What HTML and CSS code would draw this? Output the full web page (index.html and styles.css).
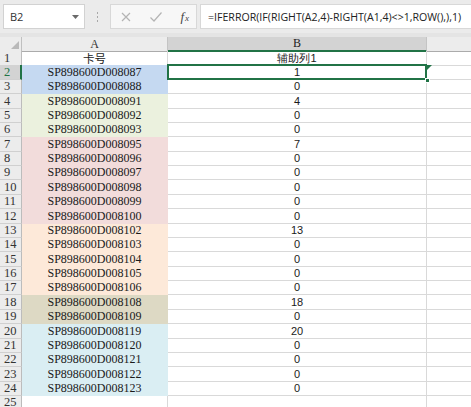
FILE: index.html
```html
<!DOCTYPE html>
<html>
<head>
<meta charset="utf-8">
<link rel="stylesheet" href="styles.css">
</head>
<body>
<div class="topbar">
  <div class="namebox">
    <span class="namebox-text">B2</span>
    <svg class="nb-arrow" width="7" height="4" viewBox="0 0 7 4"><path d="M0 0H7L3.5 4Z" fill="#6a6a6a"/></svg>
  </div>
  <div class="dots"><i></i><i></i><i></i></div>
  <div class="fxbox">
    <svg class="ic" width="12" height="12" viewBox="0 0 12 12"><path d="M2 2L10 10M10 2L2 10" stroke="#b4b4b4" stroke-width="1.2" fill="none"/></svg>
    <svg class="ic" width="14" height="12" viewBox="0 0 14 12"><path d="M1.5 6.5L5 10L12.5 1.5" stroke="#b4b4b4" stroke-width="1.2" fill="none"/></svg>
    <span class="fx"><i>f</i><span class="fx-x">x</span></span>
  </div>
  <div class="formula">=IFERROR(IF(RIGHT(A2,4)-RIGHT(A1,4)&lt;&gt;1,ROW(),),1)</div>
</div>
<div class="gap"></div>
<div class="sheet">
  <div class="row hdr">
    <div class="corner"><svg width="8" height="8" viewBox="0 0 8 8"><path d="M8 0V8H0Z" fill="#b9b9b9"/></svg></div>
    <div class="ch">A</div>
    <div class="ch ch-sel">B</div>
    <div class="ch ch-last"></div>
  </div>
  <div class="row"><div class="rh">1</div><div class="ca cjk">卡号</div><div class="cb cjk">辅助列1</div><div class="cc"></div></div>
  <div class="row"><div class="rh rh-sel">2</div><div class="ca c-blue">SP898600D008087</div><div class="cb cb-sel">1<span class="handle"></span><span class="tri"></span></div><div class="cc"></div></div>
  <div class="row"><div class="rh">3</div><div class="ca c-blue">SP898600D008088</div><div class="cb">0</div><div class="cc"></div></div>
  <div class="row"><div class="rh">4</div><div class="ca c-green">SP898600D008091</div><div class="cb">4</div><div class="cc"></div></div>
  <div class="row"><div class="rh">5</div><div class="ca c-green">SP898600D008092</div><div class="cb">0</div><div class="cc"></div></div>
  <div class="row"><div class="rh">6</div><div class="ca c-green">SP898600D008093</div><div class="cb">0</div><div class="cc"></div></div>
  <div class="row"><div class="rh">7</div><div class="ca c-pink">SP898600D008095</div><div class="cb">7</div><div class="cc"></div></div>
  <div class="row"><div class="rh">8</div><div class="ca c-pink">SP898600D008096</div><div class="cb">0</div><div class="cc"></div></div>
  <div class="row"><div class="rh">9</div><div class="ca c-pink">SP898600D008097</div><div class="cb">0</div><div class="cc"></div></div>
  <div class="row"><div class="rh">10</div><div class="ca c-pink">SP898600D008098</div><div class="cb">0</div><div class="cc"></div></div>
  <div class="row"><div class="rh">11</div><div class="ca c-pink">SP898600D008099</div><div class="cb">0</div><div class="cc"></div></div>
  <div class="row"><div class="rh">12</div><div class="ca c-pink">SP898600D008100</div><div class="cb">0</div><div class="cc"></div></div>
  <div class="row"><div class="rh">13</div><div class="ca c-peach">SP898600D008102</div><div class="cb">13</div><div class="cc"></div></div>
  <div class="row"><div class="rh">14</div><div class="ca c-peach">SP898600D008103</div><div class="cb">0</div><div class="cc"></div></div>
  <div class="row"><div class="rh">15</div><div class="ca c-peach">SP898600D008104</div><div class="cb">0</div><div class="cc"></div></div>
  <div class="row"><div class="rh">16</div><div class="ca c-peach">SP898600D008105</div><div class="cb">0</div><div class="cc"></div></div>
  <div class="row"><div class="rh">17</div><div class="ca c-peach">SP898600D008106</div><div class="cb">0</div><div class="cc"></div></div>
  <div class="row"><div class="rh">18</div><div class="ca c-tan">SP898600D008108</div><div class="cb">18</div><div class="cc"></div></div>
  <div class="row"><div class="rh">19</div><div class="ca c-tan">SP898600D008109</div><div class="cb">0</div><div class="cc"></div></div>
  <div class="row"><div class="rh">20</div><div class="ca c-cyan">SP898600D008119</div><div class="cb">20</div><div class="cc"></div></div>
  <div class="row"><div class="rh">21</div><div class="ca c-cyan">SP898600D008120</div><div class="cb">0</div><div class="cc"></div></div>
  <div class="row"><div class="rh">22</div><div class="ca c-cyan">SP898600D008121</div><div class="cb">0</div><div class="cc"></div></div>
  <div class="row"><div class="rh">23</div><div class="ca c-cyan">SP898600D008122</div><div class="cb">0</div><div class="cc"></div></div>
  <div class="row"><div class="rh">24</div><div class="ca c-cyan">SP898600D008123</div><div class="cb">0</div><div class="cc"></div></div>
  <div class="row"><div class="rh">25</div><div class="ca"></div><div class="cb"></div><div class="cc"></div></div>
</div>
</body>
</html>
```
FILE: styles.css
```css
* { box-sizing: border-box; }
html, body { margin: 0; padding: 0; }
body {
  width: 471px;
  height: 407px;
  overflow: hidden;
  background: #ffffff;
  font-family: "Liberation Sans", Arial, sans-serif;
}

.topbar {
  height: 33px;
  background: #ebebeb;
  display: flex;
  align-items: center;
  padding-left: 3px;
}
.namebox {
  width: 82px;
  height: 25px;
  background: #ffffff;
  border: 1px solid #d2d2d2;
  display: flex;
  align-items: center;
  justify-content: space-between;
  padding: 0 5px 0 6px;
}
.namebox-text {
  font-family: "Open Sans", "Noto Sans", sans-serif;
  font-size: 11px;
  color: #333;
}
.dots {
  width: 25px;
  display: flex;
  flex-direction: column;
  align-items: center;
  gap: 2px;
}
.dots i {
  display: block;
  width: 1px;
  height: 2px;
  background: #a8a8a8;
}
.fxbox {
  width: 87px;
  height: 25px;
  background: #f7f7f7;
  border: 1px solid #d8d8d8;
  display: flex;
  align-items: center;
  justify-content: space-between;
  padding: 0 7px 0 9px;
}
.ic { display: block; }
.fx {
  font-family: "Liberation Serif", serif;
  font-size: 12px;
  color: #444;
  font-style: italic;
}
.fx i { font-size: 13px; }
.fx-x { font-size: 9px; margin-left: 1px; }
.formula {
  flex: 1;
  margin-left: 3px;
  height: 25px;
  background: #ffffff;
  border: 1px solid #d8d8d8;
  border-right: none;
  display: flex;
  align-items: center;
  padding-left: 7px;
  font-family: "Open Sans", "Noto Sans", sans-serif;
  font-size: 10.6px;
  color: #222;
  white-space: nowrap;
  overflow: hidden;
}

.gap { height: 4px; background: #e4e4e4; }

.row {
  display: grid;
  grid-template-columns: 22px 146px 259px 1fr;
  height: 14.375px;
}
.row.hdr { height: 14px; }
.row > div {
  border-right: 1px solid #d9d9d9;
  border-bottom: 1px solid #d9d9d9;
  display: flex;
  align-items: flex-end;
  justify-content: center;
  line-height: 13px;
  white-space: nowrap;
  position: relative;
}

.corner {
  background: #ececec;
  border-right-color: #c0c0c0 !important;
  border-bottom-color: #ababab !important;
  justify-content: flex-end !important;
  padding: 0 2px 2px 0;
}
.corner svg { display: block; }
.ch {
  background: #ececec;
  border-right-color: #c4c4c4 !important;
  border-bottom-color: #ababab !important;
  font-family: "Liberation Serif", serif;
  font-size: 12px;
  color: #333;
}
.ch-sel {
  background: #d3d3d3;
  border-bottom: 2px solid #217346 !important;
  color: #222;
}
.ch-last { border-right: none !important; }

.rh {
  background: #ececec;
  border-right-color: #bcbcbc !important;
  border-bottom-color: #d0d0d0 !important;
  font-family: "Liberation Serif", serif;
  font-size: 12.5px;
  color: #333;
  justify-content: flex-start !important;
  padding-left: 4px;
}
.rh-sel {
  background: #d3d3d3;
  border-right: 2px solid #217346 !important;
  color: #217346;
}

.ca {
  font-family: "Liberation Serif", serif;
  font-size: 12px;
  color: #1a1a1a;
}
.cjk {
  font-family: "Noto Sans CJK SC", sans-serif;
  font-size: 11.5px;
  color: #1a1a1a;
  line-height: 14px !important;
}
.cb {
  font-family: "Liberation Sans", Arial, sans-serif;
  font-size: 11px;
  color: #1a1a1a;
}
.cc { border-right: none !important; }

.c-blue { background: #c5d9f1; border-color: transparent !important; }
.c-green { background: #ebf1de; border-color: transparent !important; }
.c-pink { background: #f2dcdb; border-color: transparent !important; }
.c-peach { background: #fde9d9; border-color: transparent !important; }
.c-tan { background: #ddd9c4; border-color: transparent !important; }
.c-cyan { background: #daeef3; border-color: transparent !important; }

.cb-sel { overflow: visible; }
.cb-sel::before {
  content: "";
  position: absolute;
  left: -1px;
  top: -1px;
  right: -1px;
  bottom: -1px;
  border: 2px solid #217346;
  pointer-events: none;
}
.handle {
  position: absolute;
  right: -4px;
  bottom: -4px;
  width: 5px;
  height: 5px;
  background: #217346;
  border: 1px solid #ffffff;
  z-index: 2;
}
.tri {
  position: absolute;
  right: -6px;
  top: 0;
  width: 0;
  height: 0;
  border-top: 5px solid #217346;
  border-right: 5px solid transparent;
  z-index: 2;
}
```
